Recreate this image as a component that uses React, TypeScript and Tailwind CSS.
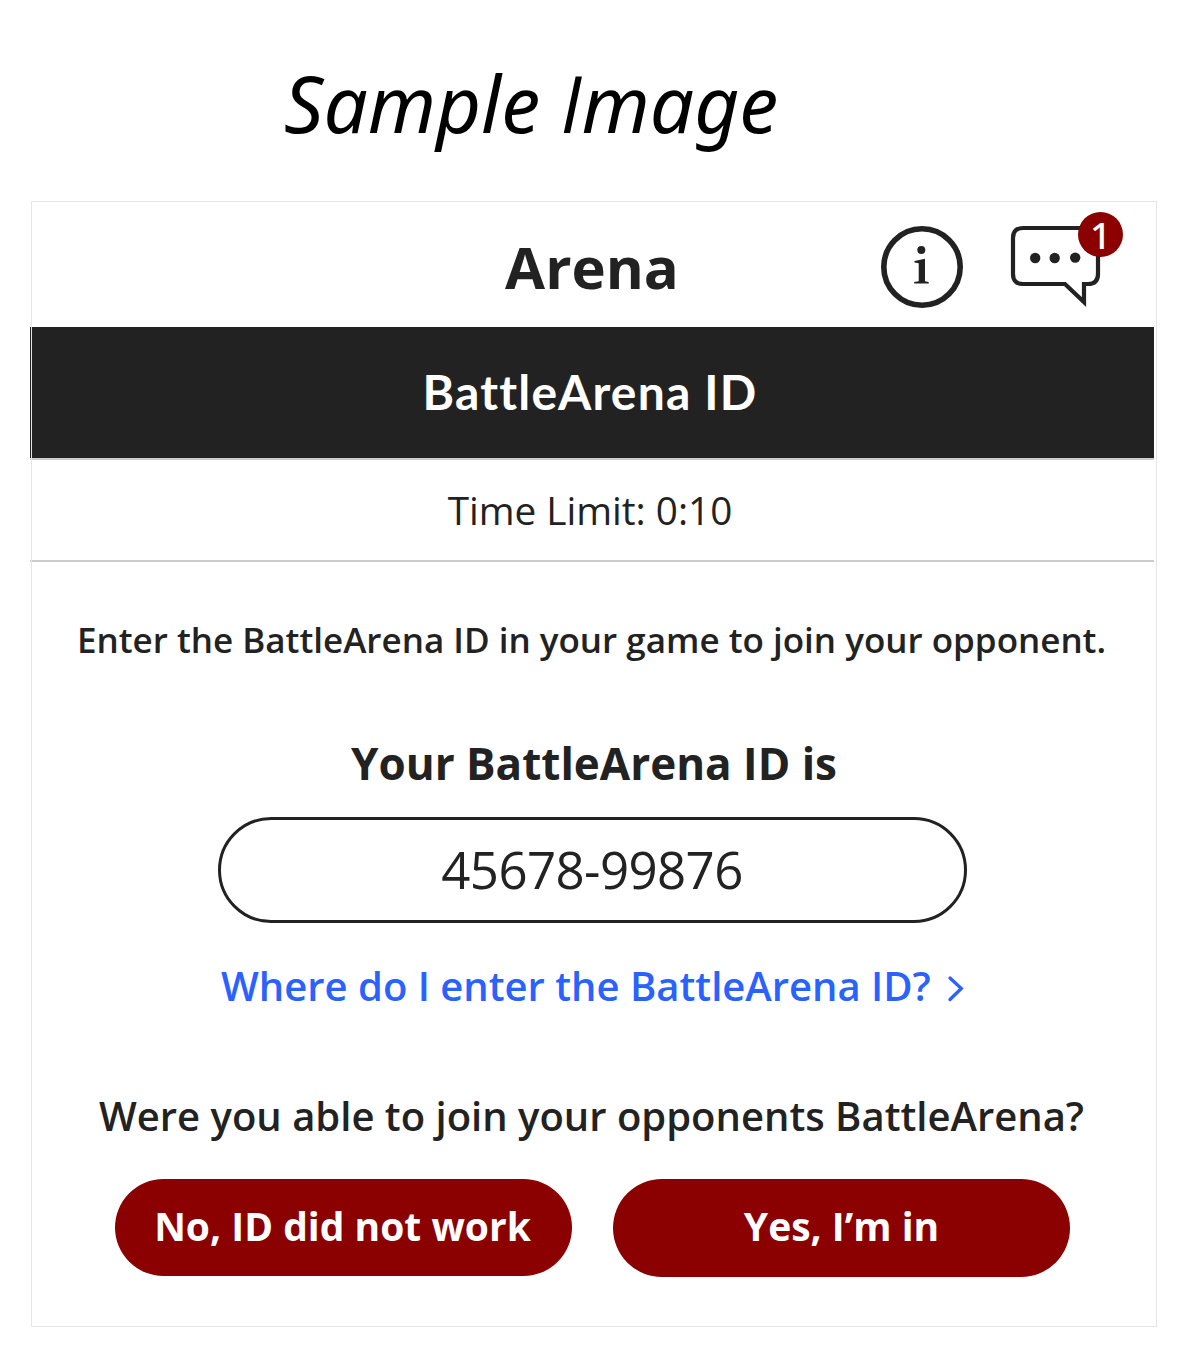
import React from "react";

function InfoIcon() {
  return (
    <svg width="84" height="84" viewBox="0 0 84 84" fill="none">
      <circle cx="42" cy="42" r="38.2" stroke="#222" strokeWidth="5.6" />
      <circle cx="41.3" cy="25" r="4" fill="#222" />
      <path d="M34.5 36L45 33.8V56.3L48.7 57V58.5H34.2V57L38.7 56.3V38.2L34.5 37.6Z" fill="#222" />
    </svg>
  );
}

function ChatIcon() {
  return (
    <svg width="92" height="84" viewBox="0 0 92 84" fill="none">
      <path d="M13 3H78Q88 3 88 13V49Q88 59 78 59H74V77L55 59H13Q3 59 3 49V13Q3 3 13 3Z" stroke="#222" strokeWidth="4.2" />
      <circle cx="25.2" cy="33" r="5.2" fill="#222" />
      <circle cx="44.7" cy="33" r="5.2" fill="#222" />
      <circle cx="65.2" cy="32.6" r="5.2" fill="#222" />
    </svg>
  );
}

function Chevron() {
  return (
    <svg width="17" height="28" viewBox="0 0 17 28" fill="none">
      <path d="M3 3L14.3 13.5L3 24.5" stroke="#2962ff" strokeWidth="3.3" strokeLinecap="round" />
    </svg>
  );
}

export default function App() {
  return (
    <main className="h-[1366px] w-[1200px] overflow-hidden bg-white pt-[47px] font-['Open_Sans',sans-serif] text-[#222]">
      <h1 className="ml-[284px] h-[154px] whitespace-nowrap font-['Noto_Sans',sans-serif] text-[78px] leading-[112px] italic text-black">
        Sample <span className="font-['Open_Sans',sans-serif] font-medium">I</span>mage
      </h1>
      <section className="relative ml-[31px] h-[1126px] w-[1126px] border border-transparent">
        <header className="relative h-[125px] w-[1120px] text-center">
          <h2 className="pt-[24px] text-[58px] leading-[82px] font-bold">Arena</h2>
          <div className="absolute top-[23px] left-[848px]"><InfoIcon /></div>
          <div className="absolute top-[23px] left-[978px]"><ChatIcon /></div>
          <span className="absolute top-[10px] left-[1046px] h-[45px] w-[45px] rounded-full bg-[#8b0000] font-['Noto_Sans',sans-serif] text-[37px] leading-[45px] font-medium text-white">1</span>
        </header>
        <div className="-ml-[2px] h-[131px] w-[1124px] bg-[#222] pr-[4px] text-center font-[Lato,sans-serif] text-[48px] leading-[129px] font-bold tracking-[1.2px] text-white [font-variant-ligatures:none]">BattleArena ID</div>
        <p className="-ml-[2px] h-[104px] w-[1124px] border-y-2 border-[#ccc] pr-[4px] text-center text-[38.7px] leading-[101px]">Time Limit: 0:10</p>
        <p className="mt-[52px] w-[1119px] text-center text-[35px] leading-[52px] font-semibold whitespace-nowrap">Enter the BattleArena ID in your game to join your opponent.</p>
        <h3 className="mt-[67px] text-center text-[44px] leading-[60px] font-bold">Your BattleArena ID is</h3>
        <div className="mt-[24px] ml-[186px] h-[106px] w-[749px] rounded-full border-3 border-[#222] pr-px text-center text-[51px] leading-[99px] tracking-[-0.6px]">45678-99876</div>
        <div className="mt-[35px] ml-[189px] flex items-center gap-[16px] text-[40px] leading-[56px] font-semibold whitespace-nowrap text-[#2962ff]">
          <span>Where do I enter the BattleArena ID?</span>
          <span className="mt-[5px]"><Chevron /></span>
        </div>
        <p className="mt-[74px] w-[1119px] text-center text-[40px] leading-[56px] font-semibold">Were you able to join your opponents BattleArena?</p>
        <div className="mt-[35px] ml-[83px] flex gap-[41px] text-center text-[39px] leading-[94px] font-bold text-white">
          <div className="h-[97px] w-[457px] rounded-full bg-[#8b0000] pr-[2px]">No, ID did not work</div>
          <div className="h-[98px] w-[457px] rounded-full bg-[#8b0000]">Yes, I’m in</div>
        </div>
        <div className="pointer-events-none absolute -inset-px border border-[#e6e6e6]" />
      </section>
    </main>
  );
}
